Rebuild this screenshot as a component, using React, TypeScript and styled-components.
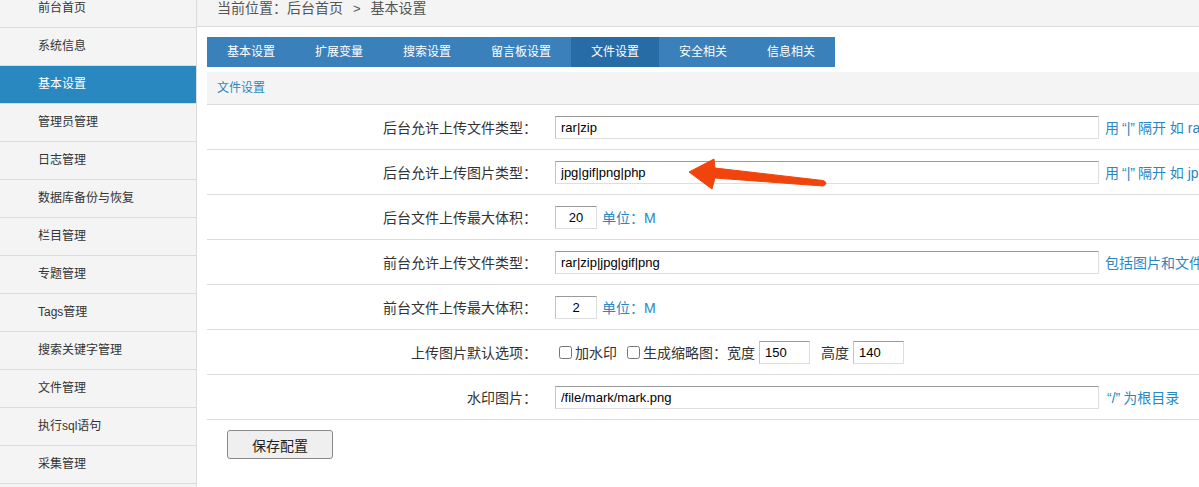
import React from "react";
import styled, { createGlobalStyle } from "styled-components";

const GlobalStyle = createGlobalStyle`
  html, body {
    margin: 0;
    padding: 0;
    overflow: hidden;
    background: #fff;
  }
  body {
    font-family: "Liberation Sans", "Noto Sans CJK SC", sans-serif;
    color: #333;
  }
  * { box-sizing: border-box; }
`;

const Page = styled.div`
  position: relative;
  display: flex;
  margin-top: -10px;
  height: calc(100vh + 10px);
  overflow: hidden;
`;

const Sidebar = styled.nav`
  width: 197px;
  flex-shrink: 0;
  background: #f4f4f4;
  border-right: 1px solid #dcdcdc;
`;

const MenuItem = styled.div<{ $active?: boolean }>`
  height: 38px;
  line-height: 37px;
  border-bottom: 1px solid #dcdcdc;
  padding-left: 38px;
  font-size: 12px;
  color: ${(p) => (p.$active ? "#fff" : "#333")};
  background: ${(p) => (p.$active ? "#2a88c1" : "transparent")};
  white-space: nowrap;
`;

const Main = styled.main`
  flex: 1;
  min-width: 0;
  overflow: hidden;
`;

const Breadcrumb = styled.div`
  height: 37px;
  line-height: 36px;
  padding-left: 20px;
  background: #f4f4f4;
  border-bottom: 1px solid #dcdcdc;
  font-size: 14px;
  color: #555;
  white-space: nowrap;
`;

const Sep = styled.span`
  margin: 0 10px;
  font-size: 13px;
`;

const Content = styled.div`
  padding: 10px 0 0 10px;
`;

const Tabs = styled.div`
  display: flex;
  width: max-content;
`;

const Tab = styled.div<{ $active?: boolean }>`
  height: 30px;
  line-height: 30px;
  padding: 0 20px;
  font-size: 12px;
  color: #fff;
  background: ${(p) => (p.$active ? "#286ca5" : "#3a80ba")};
  white-space: nowrap;
`;

const SubHeader = styled.div`
  margin-top: 5px;
  height: 33px;
  line-height: 32px;
  padding-left: 10px;
  background: #f4f4f4;
  border-bottom: 1px solid #dcdcdc;
  font-size: 12px;
  color: #2a87c2;
  width: 1300px;
`;

const Form = styled.div`
  width: 1300px;
`;

const Row = styled.div`
  display: grid;
  grid-template-columns: 330px 1fr;
  column-gap: 18px;
  align-items: center;
  height: 45px;
  border-bottom: 1px solid #dcdcdc;
`;

const Label = styled.div`
  text-align: right;
  font-size: 14px;
  color: #333;
  white-space: nowrap;
`;

const Field = styled.div`
  display: flex;
  align-items: center;
  white-space: nowrap;
`;

const TextInput = styled.input<{ $w: number; $center?: boolean }>`
  width: ${(p) => p.$w}px;
  height: 23px;
  padding: 0 5px;
  margin: 0;
  font-family: "Liberation Sans", Arial, sans-serif;
  font-size: 13px;
  color: #000;
  text-align: ${(p) => (p.$center ? "center" : "left")};
  background: #fff;
  border: 1px solid #dedede;
  border-top-color: #9a9a9a;
  border-left-color: #c4c4c4;
  outline: none;
`;

const Hint = styled.span<{ $ml?: number }>`
  margin-left: ${(p) => p.$ml ?? 6}px;
  font-size: 14px;
  color: #2a87c2;
`;

const Quote = styled.span`
  margin: 0 3px;
`;

const Text = styled.span<{ $ml?: number; $mr?: number }>`
  margin-left: ${(p) => p.$ml ?? 0}px;
  margin-right: ${(p) => p.$mr ?? 0}px;
  font-size: 14px;
  color: #333;
`;

const Check = styled.input`
  width: 13px;
  height: 13px;
  margin: 0 3px 0 4px;
`;

const Actions = styled.div`
  padding: 10px 20px;
`;

const SaveButton = styled.button`
  width: 106px;
  height: 29px;
  font-family: "Liberation Sans", "Noto Sans CJK SC", sans-serif;
  font-size: 14px;
  color: #222;
  background: #efefef;
  border: 1px solid #8a8a8a;
  border-radius: 3px;
  padding: 0;
`;

const Arrow = styled.svg`
  position: absolute;
  left: 680px;
  top: 160px;
  width: 160px;
  height: 45px;
  pointer-events: none;
`;

const menu = [
  "前台首页",
  "系统信息",
  "基本设置",
  "管理员管理",
  "日志管理",
  "数据库备份与恢复",
  "栏目管理",
  "专题管理",
  "Tags管理",
  "搜索关键字管理",
  "文件管理",
  "执行sql语句",
  "采集管理",
];

const tabs = ["基本设置", "扩展变量", "搜索设置", "留言板设置", "文件设置", "安全相关", "信息相关"];

export default function App() {
  return (
    <>
      <GlobalStyle />
      <Page>
        <Sidebar>
          {menu.map((m) => (
            <MenuItem key={m} $active={m === "基本设置"}>
              {m}
            </MenuItem>
          ))}
        </Sidebar>
        <Main>
          <Breadcrumb>
            当前位置：后台首页<Sep>&gt;</Sep>基本设置
          </Breadcrumb>
          <Content>
            <Tabs>
              {tabs.map((t) => (
                <Tab key={t} $active={t === "文件设置"}>
                  {t}
                </Tab>
              ))}
            </Tabs>
            <SubHeader>文件设置</SubHeader>
            <Form>
              <Row>
                <Label>后台允许上传文件类型：</Label>
                <Field>
                  <TextInput $w={544} defaultValue="rar|zip" />
                  <Hint>用<Quote>“|”</Quote>隔开 如 rar|zip</Hint>
                </Field>
              </Row>
              <Row>
                <Label>后台允许上传图片类型：</Label>
                <Field>
                  <TextInput $w={544} defaultValue="jpg|gif|png|php" />
                  <Hint>用<Quote>“|”</Quote>隔开 如 jpg|gif|png</Hint>
                </Field>
              </Row>
              <Row>
                <Label>后台文件上传最大体积：</Label>
                <Field>
                  <TextInput $w={42} $center defaultValue="20" />
                  <Hint $ml={5}>单位：M</Hint>
                </Field>
              </Row>
              <Row>
                <Label>前台允许上传文件类型：</Label>
                <Field>
                  <TextInput $w={544} defaultValue="rar|zip|jpg|gif|png" />
                  <Hint>包括图片和文件类型</Hint>
                </Field>
              </Row>
              <Row>
                <Label>前台文件上传最大体积：</Label>
                <Field>
                  <TextInput $w={42} $center defaultValue="2" />
                  <Hint $ml={5}>单位：M</Hint>
                </Field>
              </Row>
              <Row>
                <Label>上传图片默认选项：</Label>
                <Field>
                  <Check type="checkbox" />
                  <Text>加水印</Text>
                  <Check type="checkbox" style={{ marginLeft: 10 }} />
                  <Text $mr={1}>生成缩略图：宽度</Text>
                  <TextInput $w={51} defaultValue="150" style={{ marginLeft: 3 }} />
                  <Text $ml={11} $mr={4}>高度</Text>
                  <TextInput $w={51} defaultValue="140" />
                </Field>
              </Row>
              <Row>
                <Label>水印图片：</Label>
                <Field>
                  <TextInput $w={544} defaultValue="/file/mark/mark.png" />
                  <Hint $ml={5}><Quote>“/”</Quote>为根目录</Hint>
                </Field>
              </Row>
            </Form>
            <Actions>
              <SaveButton type="button">保存配置</SaveButton>
            </Actions>
          </Content>
        </Main>
        <Arrow viewBox="0 0 160 45">
          <path
            d="M9 22 L34 9 L35 18 L143 30.5 Q149 33 143 36 L35 28 L32 39 Z"
            fill="#f1440c"
            stroke="#f1440c"
            strokeWidth="1"
            strokeLinejoin="round"
          />
        </Arrow>
      </Page>
    </>
  );
}
